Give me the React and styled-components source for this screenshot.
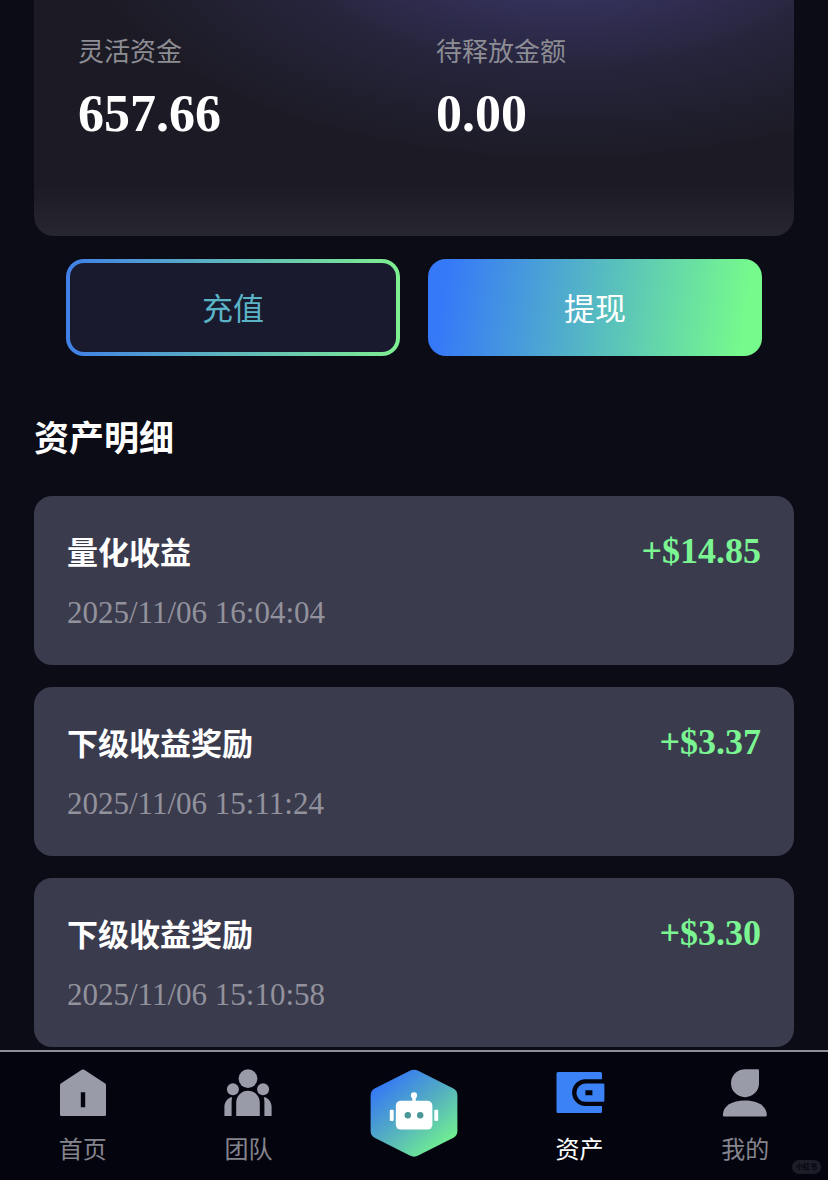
import { createGlobalStyle, styled } from "styled-components";

const GlobalStyle = createGlobalStyle`
  * {
    box-sizing: border-box;
  }
  body {
    margin: 0;
    background: #0c0c17;
    color: #fff;
    font-family: "Liberation Serif", "Noto Sans CJK SC", serif;
  }
  h2, h3, p, ul, dl, dd {
    margin: 0;
    padding: 0;
  }
`;

const Page = styled.div`
  display: flex;
  flex-direction: column;
  min-height: 100vh;
`;

const Main = styled.main`
  flex: 1;
  padding: 0 34px 3px;
`;

const BalanceCard = styled.dl`
  display: grid;
  grid-template-columns: 1fr 1fr;
  gap: 44px;
  padding: 34px 44px 92px;
  border-radius: 0 0 20px 20px;
  background:
    linear-gradient(to top, rgba(255, 255, 255, 0.05), transparent 52px),
    radial-gradient(
      ellipse 480px 230px at 70% -70px,
      #3a3668 0%,
      #34315a 30%,
      rgba(42, 40, 68, 0.7) 62%,
      transparent 100%
    ),
    #1c1b25;
`;

const BalanceLabel = styled.dt`
  font-size: 26px;
  line-height: 38px;
  color: #8d8d94;
`;

const BalanceValue = styled.dd`
  margin-top: 12px !important;
  font-size: 52px;
  line-height: 60px;
  font-weight: 700;
`;

const Actions = styled.div`
  display: grid;
  grid-template-columns: 1fr 1fr;
  gap: 28px;
  padding: 23px 32px 0;
`;

const ActionButton = styled.button`
  height: 97px;
  padding: 4px 0 0;
  border: 4px solid transparent;
  border-radius: 18px;
  font: inherit;
  font-size: 31px;
  line-height: 46px;
  cursor: pointer;
  ${(props) =>
    props.$outline
      ? `
  color: #5bb3c6;
  background:
    linear-gradient(#1a1a2e, #1a1a2e) padding-box,
    linear-gradient(90deg, #4080e8, #7ef090) border-box;
  `
      : `
  color: #fff;
  background: linear-gradient(98deg, #3679f8 6%, #76fa8c 94%) border-box;
  `}
`;

const SectionTitle = styled.h2`
  margin: 59px 0 31px !important;
  font-size: 35px;
  line-height: 50px;
  font-weight: 700;
`;

const RecordList = styled.ul`
  display: flex;
  flex-direction: column;
  gap: 22px;
  list-style: none;
`;

const RecordItem = styled.li`
  display: flex;
  justify-content: space-between;
  padding: 34px 33px 29px;
  border-radius: 18px;
  background: #3b3b4e;
`;

const RecordTitle = styled.h3`
  font-size: 31px;
  line-height: 48px;
  font-weight: 700;
`;

const RecordTime = styled.p`
  margin-top: 12px !important;
  font-size: 31px;
  line-height: 46px;
  color: #92929c;
`;

const RecordAmount = styled.p`
  font-size: 36px;
  line-height: 42px;
  font-weight: 700;
  color: #7af592;
`;

const TabBar = styled.nav`
  position: sticky;
  bottom: 0;
  display: grid;
  grid-template-columns: repeat(5, 1fr);
  height: 130px;
  border-top: 2px solid #8f8e99;
  background: #04040f;
`;

const Tab = styled.a`
  display: flex;
  flex-direction: column;
  align-items: center;
  gap: 15px;
  padding-top: 17px;
  font-size: 24px;
  line-height: 36px;
  text-decoration: none;
  color: ${(props) => (props.$active ? "#fff" : "#85858d")};

  svg {
    display: block;
    flex-shrink: 0;
    fill: ${(props) => (props.$active ? "#3b82f6" : "#9a9ba9")};
  }
`;

const SourceBadge = styled.span`
  position: absolute;
  right: 7px;
  bottom: 6px;
  padding: 0 4px;
  border-radius: 7px;
  font-size: 7px;
  line-height: 14px;
  font-weight: 700;
  background: #1d1d27;
  color: #04040f;
`;

const HomeIcon = () => (
  <svg width="48" height="48" viewBox="0 0 48 48" aria-hidden="true">
    <path
      fillRule="evenodd"
      d="M22.8 0.8Q24 0 25.2 0.8L46.2 14.6Q47 15.2 47 16.2V45.5Q47 47 45.5 47H2.5Q1 47 1 45.5V16.2Q1 15.2 1.8 14.6ZM21.8 23.3V38.2H26.2V23.3Z"
    />
  </svg>
);

const TeamIcon = () => (
  <svg width="48" height="48" viewBox="0 0 48 48" aria-hidden="true">
    <circle cx="24" cy="9.6" r="9.4" />
    <circle cx="8.9" cy="20.3" r="6" />
    <circle cx="39.1" cy="20.3" r="6" />
    <path d="M12.2 47V33.5a11.8 11.8 0 0 1 23.6 0V47Z" />
    <path d="M8.2 28C3.5 29.2 0.4 33 0.4 38V47H7.6V33Q7.6 30.2 8.2 28Z" />
    <path d="M39.8 28C44.5 29.2 47.6 33 47.6 38V47H40.4V33Q40.4 30.2 39.8 28Z" />
  </svg>
);

const WalletIcon = () => (
  <svg width="50" height="48" viewBox="-1 0 50 48" aria-hidden="true">
    <path d="M2 3H44.5Q46 3 46 4.5V10.2H29.5a13.4 13.4 0 0 0 0 26.8H46V42.5Q46 44 44.5 44H2Q0.5 44 0.5 42.5V4.5Q0.5 3 2 3Z" />
    <path
      fillRule="evenodd"
      d="M29.5 14.6H47.2Q48.4 14.6 48.4 15.8V31.6Q48.4 32.8 47.2 32.8H29.5a9.1 9.1 0 0 1 0-18.2ZM29.4 21.2V26.2H36.4V21.2Z"
    />
  </svg>
);

const UserIcon = () => (
  <svg width="48" height="48" viewBox="0 0 48 48" aria-hidden="true">
    <path d="M24 0.2H36.8Q38 0.2 38 1.4V14.2a14 14 0 1 1-14-14Z" />
    <path d="M1.9 46C1.9 37 11 31.6 23.8 31.6S45.8 37 45.8 46Q45.8 47.6 44.4 47.6H3.3Q1.9 47.6 1.9 46Z" />
  </svg>
);

const RobotIcon = () => (
  <svg width="88" height="88" viewBox="0 0 88 88" aria-hidden="true">
    <defs>
      <linearGradient id="hexFill" x1="0.1" y1="0.1" x2="0.8" y2="0.95">
        <stop offset="0.04" stopColor="#3578f6" />
        <stop offset="0.5" stopColor="#53adc2" />
        <stop offset="1" stopColor="#72f28f" />
      </linearGradient>
    </defs>
    <path
      fill="url(#hexFill)"
      d="M39.8 1.8Q44 -0.4 48.2 1.8L83.4 19.4Q87.4 21.6 87.4 26.2V62Q87.4 66.6 83.4 68.8L48.2 86.6Q44 88.8 39.8 86.6L4.6 68.8Q0.6 66.6 0.6 62V26.2Q0.6 21.6 4.6 19.4Z"
    />
    <g fill="#fff">
      <circle cx="44" cy="26.4" r="3.1" />
      <rect x="42.3" y="27" width="3.4" height="7" />
      <rect x="25.8" y="31.8" width="36.6" height="28.8" rx="5" />
      <rect x="19.8" y="40.7" width="3.9" height="11.4" rx="1" />
      <rect x="64.3" y="40.7" width="3.9" height="11.4" rx="1" />
    </g>
    <circle cx="37.8" cy="46.2" r="3.2" fill="#4a9795" />
    <circle cx="50.2" cy="46.2" r="3.2" fill="#4a9795" />
  </svg>
);

const balances = [
  { label: "灵活资金", value: "657.66" },
  { label: "待释放金额", value: "0.00" },
];

const records = [
  { title: "量化收益", time: "2025/11/06 16:04:04", amount: "+$14.85" },
  { title: "下级收益奖励", time: "2025/11/06 15:11:24", amount: "+$3.37" },
  { title: "下级收益奖励", time: "2025/11/06 15:10:58", amount: "+$3.30" },
];

const tabs = [
  { id: "home", label: "首页", Icon: HomeIcon },
  { id: "team", label: "团队", Icon: TeamIcon },
  { id: "robot", Icon: RobotIcon },
  { id: "assets", label: "资产", Icon: WalletIcon },
  { id: "mine", label: "我的", Icon: UserIcon },
];

const App = () => {
  return (
    <Page>
      <GlobalStyle />
      <Main>
        <BalanceCard>
          {balances.map(({ label, value }) => (
            <div key={label}>
              <BalanceLabel>{label}</BalanceLabel>
              <BalanceValue>{value}</BalanceValue>
            </div>
          ))}
        </BalanceCard>
        <Actions>
          <ActionButton type="button" $outline>
            充值
          </ActionButton>
          <ActionButton type="button">提现</ActionButton>
        </Actions>
        <SectionTitle>资产明细</SectionTitle>
        <RecordList>
          {records.map(({ title, time, amount }) => (
            <RecordItem key={time}>
              <div>
                <RecordTitle>{title}</RecordTitle>
                <RecordTime>{time}</RecordTime>
              </div>
              <RecordAmount>{amount}</RecordAmount>
            </RecordItem>
          ))}
        </RecordList>
      </Main>
      <TabBar>
        {tabs.map(({ id, label, Icon }) => (
          <Tab
            key={id}
            href={`#${id}`}
            aria-label={label ? undefined : "robot"}
            $active={id === "assets"}
          >
            <Icon />
            {label}
          </Tab>
        ))}
        <SourceBadge>小红书</SourceBadge>
      </TabBar>
    </Page>
  );
};
export default App;
